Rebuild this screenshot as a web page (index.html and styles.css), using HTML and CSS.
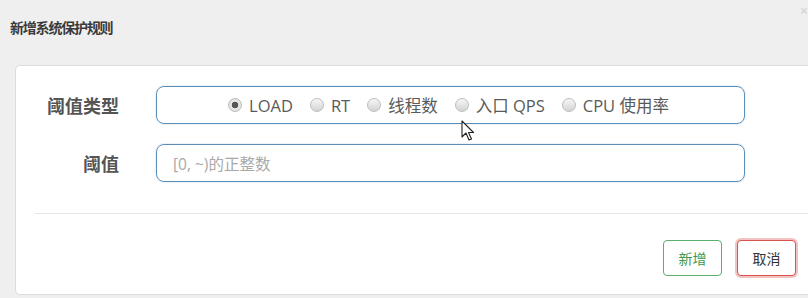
FILE: index.html
```html
<!DOCTYPE html>
<html lang="zh-CN">
<head>
<meta charset="utf-8">
<title>新增系统保护规则</title>
<link rel="stylesheet" href="styles.css">
</head>
<body>
<div class="modal">
  <div class="modal-header">
    <h4 class="modal-title">新增系统保护规则</h4>
    <span class="close">×</span>
  </div>
  <div class="card">
    <form class="form">
      <div class="row">
        <label class="label">阈值类型</label>
        <div class="field radios">
          <label class="radio"><span class="dot checked"></span>LOAD</label>
          <label class="radio"><span class="dot"></span>RT</label>
          <label class="radio"><span class="dot"></span>线程数</label>
          <label class="radio"><span class="dot"></span>入口 QPS</label>
          <label class="radio"><span class="dot"></span>CPU 使用率</label>
        </div>
      </div>
      <div class="row">
        <label class="label">阈值</label>
        <div class="field input"><span class="placeholder">[0, ~)的正整数</span></div>
      </div>
    </form>
    <div class="divider"></div>
    <div class="footer">
      <button class="btn btn-add" type="button">新增</button>
      <button class="btn btn-cancel" type="button">取消</button>
    </div>
  </div>
</div>
<svg class="cursor" width="14" height="22" viewBox="0 0 14 22"><path d="M1 1 L1 17 L5 13 L8 20 L10.5 19 L7.5 12.5 L12.5 12.5 Z" fill="#fff" stroke="#222" stroke-width="1.1" stroke-linejoin="round"/></svg>
</body>
</html>
```
FILE: styles.css
```css
html, body {
  margin: 0;
  padding: 0;
}
body {
  width: 808px;
  height: 298px;
  overflow: hidden;
  background: #efefef;
  font-family: "Open Sans", "Noto Sans CJK SC", sans-serif;
  color: #555;
  position: relative;
}
.modal {
  display: flex;
  flex-direction: column;
}
.modal-header {
  height: 65px;
  display: flex;
  align-items: flex-start;
  position: relative;
}
.modal-title {
  margin: 16px 0 0 10px;
  font-family: "Noto Sans CJK SC", sans-serif;
  font-size: 14px;
  font-weight: 700;
  letter-spacing: -1.2px;
  line-height: 22px;
  color: #3a3a3a;
}
.close {
  position: absolute;
  right: 0;
  top: 3px;
  font-size: 14px;
  line-height: 16px;
  color: #cfcfcf;
}
.card {
  margin-left: 15px;
  width: 805px;
  height: 230px;
  box-sizing: border-box;
  background: #fff;
  border: 1px solid #dcdcdc;
  border-radius: 5px;
  padding-top: 20px;
  display: flex;
  flex-direction: column;
}
.form {
  display: flex;
  flex-direction: column;
  gap: 20px;
  margin: 0;
}
.row {
  display: flex;
  align-items: center;
}
.label {
  width: 103px;
  text-align: right;
  font-family: "Noto Sans CJK SC", sans-serif;
  font-size: 18px;
  font-weight: 700;
  color: #555;
  margin-right: 37px;
}
.field {
  width: 589px;
  height: 38px;
  box-sizing: border-box;
  border: 1px solid #5d8fbb;
  border-radius: 8px;
  box-shadow: 0 0 2px rgba(93, 143, 187, 0.4);
  display: flex;
  align-items: center;
}
.radios {
  justify-content: center;
  gap: 17px;
  padding-right: 4px;
  font-size: 16.5px;
}
.radio {
  display: flex;
  align-items: center;
  gap: 7px;
  color: #5a5a5a;
}
.dot {
  width: 12px;
  height: 12px;
  border-radius: 50%;
  border: 1px solid #bdbdbd;
  background: linear-gradient(#f6f6f6, #d4d4d4);
  box-sizing: content-box;
}
.dot.checked {
  background: radial-gradient(circle, #555 0, #555 3px, #e8e8e8 3.6px, #d8d8d8 100%);
}
.input {
  padding-left: 16px;
}
.placeholder {
  font-size: 15.5px;
  color: #a9a9a9;
}
.divider {
  margin: 31px 10px 0 19px;
  height: 1px;
  background: #e6e6e6;
}
.footer {
  display: flex;
  gap: 15px;
  margin-top: 26px;
  padding-left: 647px;
}
.btn {
  width: 59px;
  height: 36px;
  box-sizing: border-box;
  border-radius: 4px;
  background: #fff;
  font-family: "Noto Sans CJK SC", sans-serif;
  font-size: 14px;
  padding: 0;
}
.btn-add {
  border: 1px solid #5cae6e;
  color: #3d9a50;
}
.btn-cancel {
  border: 1px solid #d9534f;
  color: #333;
  box-shadow: 0 0 0 2px rgba(217, 83, 79, 0.35);
}
.cursor {
  position: absolute;
  left: 461px;
  top: 120px;
}
```
